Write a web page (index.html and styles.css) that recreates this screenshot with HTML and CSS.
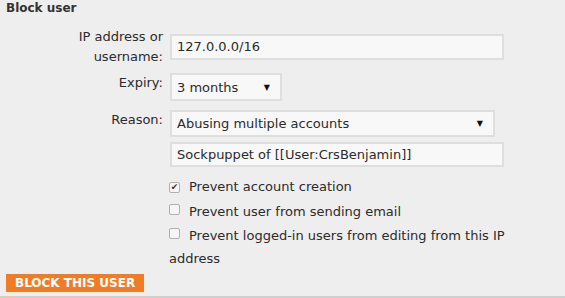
FILE: index.html
```html
<!DOCTYPE html>
<html>
<head>
  <meta charset="utf-8">
  <link rel="stylesheet" href="styles.css">
</head>
<body>
  <div class="panel">
    <h2 class="panel-title">Block user</h2>
    <div class="form">
      <label class="form-label">IP address or username:</label>
      <div class="field field-first">
        <div class="text-box">127.0.0.0/16</div>
      </div>

      <label class="form-label">Expiry:</label>
      <div class="field">
        <div class="select-box expiry">
          <span>3 months</span>
          <span class="arrow">&#9660;</span>
        </div>
      </div>

      <label class="form-label">Reason:</label>
      <div class="field">
        <div class="select-box reason">
          <span>Abusing multiple accounts</span>
          <span class="arrow">&#9660;</span>
        </div>
        <div class="text-box other">Sockpuppet of [[User:CrsBenjamin]]</div>
      </div>

      <div class="form-spacer"></div>
      <div class="field checks">
        <div class="check-row"><span class="check-box checked">&#10004;</span>Prevent account creation</div>
        <div class="check-row"><span class="check-box"></span>Prevent user from sending email</div>
        <div class="check-row"><span class="check-box"></span>Prevent logged-in users from editing from this IP address</div>
      </div>
    </div>
    <div class="button-container">
      <span class="button">Block this user</span>
    </div>
  </div>
</body>
</html>
```
FILE: styles.css
```css
/* Main Element Styles */
body {
  margin: 0;
  background-color: #eeeeee;
  font-family: "DejaVu Sans", sans-serif;
  font-size: 13px;
  color: #2b2b2b;
}
.panel {
  height: 296px;
  border-bottom: 2px solid #cfcfcf;
  padding: 0 6px;
}
.panel-title {
  margin: 0;
  padding-top: 1px;
  font-size: 12px;
  font-weight: bold;
  line-height: 15px;
  color: #333;
}

/* Form Grid */
.form {
  display: grid;
  grid-template-columns: 157px 350px;
  column-gap: 4px;
  margin-top: 11px;
}
.form-label {
  text-align: right;
  line-height: 20px;
  padding-left: 50px;
  margin-bottom: 6px;
}
.field {
  padding-left: 3px;
}
.field-first {
  padding-top: 7px;
}
.text-box, .select-box {
  box-sizing: border-box;
  background-color: #f8f8f8;
  border: 2px solid #dedede;
  padding: 0 5px;
}
.text-box {
  width: 334px;
  height: 26px;
  line-height: 22px;
}
.select-box {
  display: flex;
  justify-content: space-between;
  align-items: center;
  height: 28px;
  margin-bottom: 9px;
  padding-right: 10px;
}
.expiry {
  width: 112px;
}
.reason {
  width: 325px;
  height: 27px;
  margin-bottom: 5px;
}
.arrow {
  font-size: 8px;
  color: #111;
}
.other {
  height: 25px;
  line-height: 21px;
}

/* Checkbox Styles */
.checks {
  padding-top: 7px;
  padding-left: 0;
  margin-left: -2px;
}
.check-row {
  line-height: 25px;
  padding-left: 4px;
}
.check-row:last-child {
  line-height: 23px;
}
.check-box {
  display: inline-block;
  box-sizing: border-box;
  width: 11px;
  height: 11px;
  margin-right: 9px;
  border: 1px solid #b0b0b0;
  border-radius: 2px;
  background-color: #f6f6f6;
  font-size: 9px;
  line-height: 9px;
  text-align: center;
  color: #333;
  vertical-align: 1px;
}

/* Button Styles */
.button-container {
  margin-top: 4px;
}
.button {
  display: inline-block;
  background-color: #f07d26;
  color: white;
  font-weight: bold;
  text-transform: uppercase;
  font-size: 12px;
  line-height: 18px;
  padding: 0 9px;
}
```
